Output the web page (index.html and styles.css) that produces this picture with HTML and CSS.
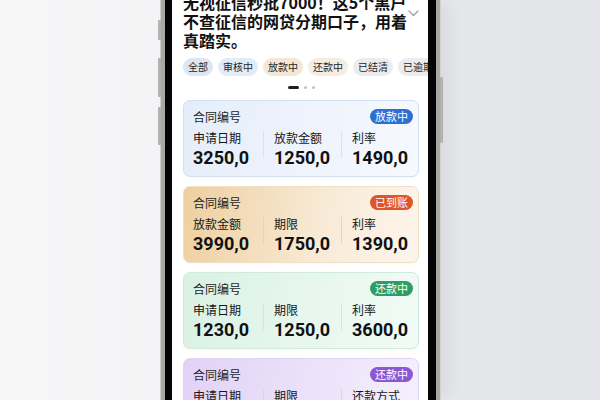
FILE: index.html
```html
<!DOCTYPE html>
<html lang="zh-CN">
<head>
<meta charset="utf-8">
<title>合同列表</title>
<link rel="stylesheet" href="styles.css">
</head>
<body>
<div class="stage">
  <div class="phone">
    <span class="btn btn-l1"></span>
    <span class="btn btn-l2"></span>
    <span class="btn btn-l3"></span>
    <span class="btn btn-r1"></span>
    <div class="screen">
      <div class="content">
        <div class="title-row">
          <h1 class="title"><span>无视征信秒批7000！这5个黑户</span><span>不查征信的网贷分期口子，用着</span><span>真踏实。</span></h1>
          <svg class="chev" width="11" height="7" viewBox="0 0 11 7"><polyline points="1,1 5.5,5.5 10,1" fill="none" stroke="#9a9a9a" stroke-width="1.2" stroke-linecap="round" stroke-linejoin="round"/></svg>
        </div>
        <div class="chips">
          <span class="chip chip-blue">全部</span>
          <span class="chip chip-blue2">审核中</span>
          <span class="chip chip-beige">放款中</span>
          <span class="chip chip-beige2">还款中</span>
          <span class="chip chip-gray">已结清</span>
          <span class="chip chip-gray">已逾期</span>
        </div>
        <div class="dots"><span class="dot dot-on"></span><span class="dot"></span><span class="dot"></span></div>
        <div class="cards">
          <div class="card card-blue">
            <div class="card-head"><span class="card-no">合同编号</span><span class="badge badge-blue">放款中</span></div>
            <div class="stats">
              <div class="stat"><div class="lbl">申请日期</div><div class="val">3250,0</div></div>
              <div class="stat"><div class="lbl">放款金额</div><div class="val">1250,0</div></div>
              <div class="stat"><div class="lbl">利率</div><div class="val">1490,0</div></div>
            </div>
          </div>
          <div class="card card-gold">
            <div class="card-head"><span class="card-no">合同编号</span><span class="badge badge-orange">已到账</span></div>
            <div class="stats">
              <div class="stat"><div class="lbl">放款金额</div><div class="val">3990,0</div></div>
              <div class="stat"><div class="lbl">期限</div><div class="val">1750,0</div></div>
              <div class="stat"><div class="lbl">利率</div><div class="val">1390,0</div></div>
            </div>
          </div>
          <div class="card card-green">
            <div class="card-head"><span class="card-no">合同编号</span><span class="badge badge-green">还款中</span></div>
            <div class="stats">
              <div class="stat"><div class="lbl">申请日期</div><div class="val">1230,0</div></div>
              <div class="stat"><div class="lbl">期限</div><div class="val">1250,0</div></div>
              <div class="stat"><div class="lbl">利率</div><div class="val">3600,0</div></div>
            </div>
          </div>
          <div class="card card-purple">
            <div class="card-head"><span class="card-no">合同编号</span><span class="badge badge-purple">还款中</span></div>
            <div class="stats">
              <div class="stat"><div class="lbl">申请日期</div><div class="val">2680,0</div></div>
              <div class="stat"><div class="lbl">期限</div><div class="val">1200,0</div></div>
              <div class="stat"><div class="lbl">还款方式</div><div class="val">等额本息</div></div>
            </div>
          </div>
        </div>
      </div>
    </div>
  </div>
</div>
</body>
</html>
```
FILE: styles.css
```css
* { box-sizing: border-box; }
html, body { margin: 0; padding: 0; }
body {
  width: 600px;
  height: 400px;
  overflow: hidden;
  font-family: "Noto Sans CJK SC", "Noto Sans", sans-serif;
  background: linear-gradient(90deg, #f7f7f8 0%, #f3f3f5 30%, #eceef0 60%, #e4e6ea 80%, #e2e4e8 100%);
}
.stage {
  display: flex;
  justify-content: center;
  height: 400px;
}
.phone {
  position: relative;
  width: 279px;
  height: 400px;
  margin-left: 1px;
  background: #050505;
  border-left: 4px solid #a9a8a5;
  border-right: 4px solid #a9a8a5;
  padding: 0 8px 0 7px;
  box-shadow: -1px 0 0 #d2d1ce, 1px 0 0 #d2d1ce, 10px 0 18px rgba(0,0,0,0.06);
}
.btn {
  position: absolute;
  width: 3px;
  background: #b3b2af;
  border-radius: 1px;
}
.btn-l1 { left: -7px; top: 20px; height: 20px; }
.btn-l2 { left: -7px; top: 58px; height: 39px; }
.btn-l3 { left: -7px; top: 107px; height: 38px; }
.btn-r1 { right: -7px; top: 77px; height: 66px; }
.screen {
  width: 256px;
  height: 400px;
  background: #ffffff;
  overflow: hidden;
}
.content {
  padding: 0 9px 0 11px;
}
.title-row {
  display: flex;
  align-items: flex-start;
  margin-top: -7px;
}
.title {
  margin: 0;
  width: 226px;
  font-size: 16px;
  line-height: 19px;
  font-weight: 700;
  color: #111111;
  white-space: nowrap;
}
.title span { display: block; }
.chev { margin-left: auto; margin-top: 17px; flex-shrink: 0; }
.chips {
  display: flex;
  gap: 5px;
  margin-top: 8px;
  margin-right: -9px;
  overflow: hidden;
}
.chip {
  flex-shrink: 0;
  height: 18px;
  line-height: 18px;
  padding: 0 5px;
  border-radius: 9px;
  font-size: 10px;
  color: #262626;
  white-space: nowrap;
}
.chip-blue { background: #dce7f5; }
.chip-blue2 { background: #e3ebf6; }
.chip-beige { background: #f3e8d5; }
.chip-beige2 { background: #f6ede0; }
.chip-gray { background: #eaecef; }
.dots {
  display: flex;
  justify-content: center;
  gap: 5px;
  margin-top: 10px;
  height: 3px;
}
.dot { width: 3px; height: 3px; border-radius: 2px; background: #c2c2c2; }
.dot-on { width: 11px; background: #1e1e1e; }
.cards {
  display: flex;
  flex-direction: column;
  gap: 9px;
  margin-top: 11px;
}
.card {
  height: 77px;
  flex-shrink: 0;
  border: 1px solid #d7e4f3;
  border-radius: 7px;
  padding: 8px 5px 0 9px;
  box-shadow: 0 1px 2px rgba(0,0,0,0.03);
  --div: #dbe2ec;
}
.card-blue {
  background: linear-gradient(100deg, #e4edf9 0%, #edf3fc 45%, #f6f9fe 100%);
  border-color: #d2e1f2;
}
.card-gold {
  background: linear-gradient(100deg, #eecf9f 0%, #f3dcb9 28%, #f8ead6 58%, #fdf5ec 100%);
  border-color: #f1e0c8;
  --div: #e6d4b8;
}
.card-green {
  background: linear-gradient(100deg, #daf1e4 0%, #e5f6ec 45%, #f1fbf6 100%);
  border-color: #d0eadc;
  --div: #d3e6dc;
}
.card-purple {
  background: linear-gradient(100deg, #e2d2f7 0%, #eadff9 45%, #f5f0fd 100%);
  border-color: #e0d4f3;
  --div: #ddd2ec;
}
.card-head {
  display: flex;
  justify-content: space-between;
  align-items: center;
  height: 15px;
}
.card-no {
  font-size: 12px;
  line-height: 15px;
  color: #1e1e1e;
}
.badge {
  height: 15px;
  line-height: 15px;
  padding: 0 5px;
  border-radius: 8px;
  font-size: 11px;
  color: #ffffff;
}
.badge-blue { background: #2f6fd0; }
.badge-orange { background: #e0542b; }
.badge-green { background: #2f9c63; }
.badge-purple { background: #8b57d2; }
.stats {
  display: grid;
  grid-template-columns: 70px 78px 1fr;
  margin-top: 5.5px;
}
.stat + .stat {
  padding-left: 11px;
  background: linear-gradient(var(--div), var(--div)) left 1px / 1px 27px no-repeat;
}
.lbl {
  font-size: 12px;
  line-height: 16px;
  color: #161616;
  white-space: nowrap;
}
.val {
  margin-top: 2px;
  font-family: Roboto, "Liberation Sans", "Noto Sans CJK SC", sans-serif;
  font-size: 18px;
  line-height: 20px;
  font-weight: 700;
  color: #111111;
  white-space: nowrap;
}
```
